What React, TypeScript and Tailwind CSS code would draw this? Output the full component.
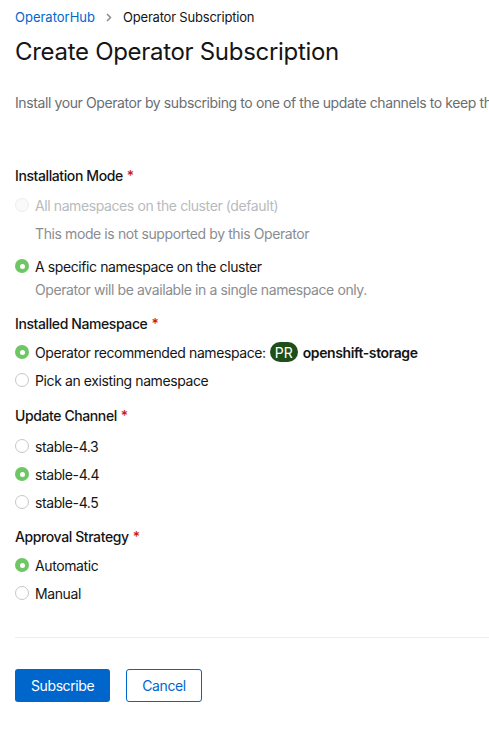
import React from "react";

function Radio({ checked, disabled }: { checked?: boolean; disabled?: boolean }) {
  if (checked) {
    return (
      <span className="flex h-[14px] w-[14px] shrink-0 items-center justify-center rounded-full bg-[#6ec664]">
        <span className="h-[5px] w-[5px] rounded-full bg-white" />
      </span>
    );
  }
  return (
    <span
      className={
        disabled
          ? "h-[14px] w-[14px] shrink-0 rounded-full border border-[#ededed] bg-[#fafafa]"
          : "h-[14px] w-[14px] shrink-0 rounded-full border border-[#c7c7c7] bg-white"
      }
    />
  );
}

function Option({
  label,
  checked,
  disabled,
  help,
}: {
  label: React.ReactNode;
  checked?: boolean;
  disabled?: boolean;
  help?: string;
}) {
  return (
    <div>
      <div className="flex h-[28px] items-center gap-[6px]">
        <Radio checked={checked} disabled={disabled} />
        <span className={disabled ? "text-[#b8bbbe]" : "text-[#151515]"}>{label}</span>
      </div>
      {help && <div className="h-[29px] pl-[20px] leading-[29px] text-[#8a8d90]">{help}</div>}
    </div>
  );
}

function Label({ children }: { children: React.ReactNode }) {
  return (
    <div className="mb-[1px] flex h-[28px] items-center font-medium text-[#151515]">
      {children}
      <span className="ml-[4px] text-[#c9190b]">*</span>
    </div>
  );
}

export default function App() {
  return (
    <div className="h-[750px] w-[489px] overflow-hidden bg-white font-['Inter',sans-serif] text-[14px] tracking-[-0.4px] whitespace-nowrap">
      <div className="pl-[15px]">
        <div className="flex h-[34px] items-center pt-[1px] text-[13px] tracking-normal">
          <span className="text-[#0066cc]">OperatorHub</span>
          <svg className="mx-[11px]" width="6" height="9" viewBox="0 0 6 9">
            <path d="M1 1l3.5 3.5L1 8" fill="none" stroke="#8a8d90" strokeWidth="1.5" />
          </svg>
          <span className="tracking-[-0.2px] text-[#151515]">Operator Subscription</span>
        </div>
        <h1 className="flex h-[36px] items-center text-[24px] font-normal tracking-[-0.3px] text-[#151515]">
          Create Operator Subscription
        </h1>
        <p className="mt-[22px] text-[#6a6e73]">
          Install your Operator by subscribing to one of the update channels to keep the Operator up to date.
        </p>
        <div className="mt-[48px]">
          <Label>Installation Mode</Label>
          <div className="mt-[2px]">
            <Option label="All namespaces on the cluster (default)" disabled help="This mode is not supported by this Operator" />
            <div className="mt-[4px]" />
            <Option label="A specific namespace on the cluster" checked />
            <div className="-mt-[1px] pl-[20px] leading-[22px] text-[#8a8d90]">
              Operator will be available in a single namespace only.
            </div>
          </div>
          <div className="mt-[8px]">
            <Label>Installed Namespace</Label>
            <Option
              checked
              label={
                <span className="flex items-center">
                  Operator recommended namespace:
                  <span className="ml-[4px] flex h-[20px] items-center rounded-full bg-[#1e4f18] px-[5px] text-[14px] tracking-normal text-white">
                    PR
                  </span>
                  <span className="ml-[5px] font-semibold">openshift-storage</span>
                </span>
              }
            />
            <Option label="Pick an existing namespace" />
          </div>
          <div className="mt-[7px]">
            <Label>Update Channel</Label>
            <div className="mt-[3px]">
              <Option label="stable-4.3" />
              <Option label="stable-4.4" checked />
              <Option label="stable-4.5" />
            </div>
          </div>
          <div className="mt-[6px]">
            <Label>Approval Strategy</Label>
            <Option label="Automatic" checked />
            <Option label="Manual" />
          </div>
        </div>
        <div className="mt-[30px] h-px bg-[#ededed]" />
        <div className="mt-[31px] flex gap-[16px]">
          <button className="h-[33px] rounded-[3px] bg-[#0066cc] px-[16px] text-white">Subscribe</button>
          <button className="h-[33px] rounded-[3px] border border-[#0066cc] px-[15px] text-[#0066cc]">Cancel</button>
        </div>
      </div>
    </div>
  );
}
